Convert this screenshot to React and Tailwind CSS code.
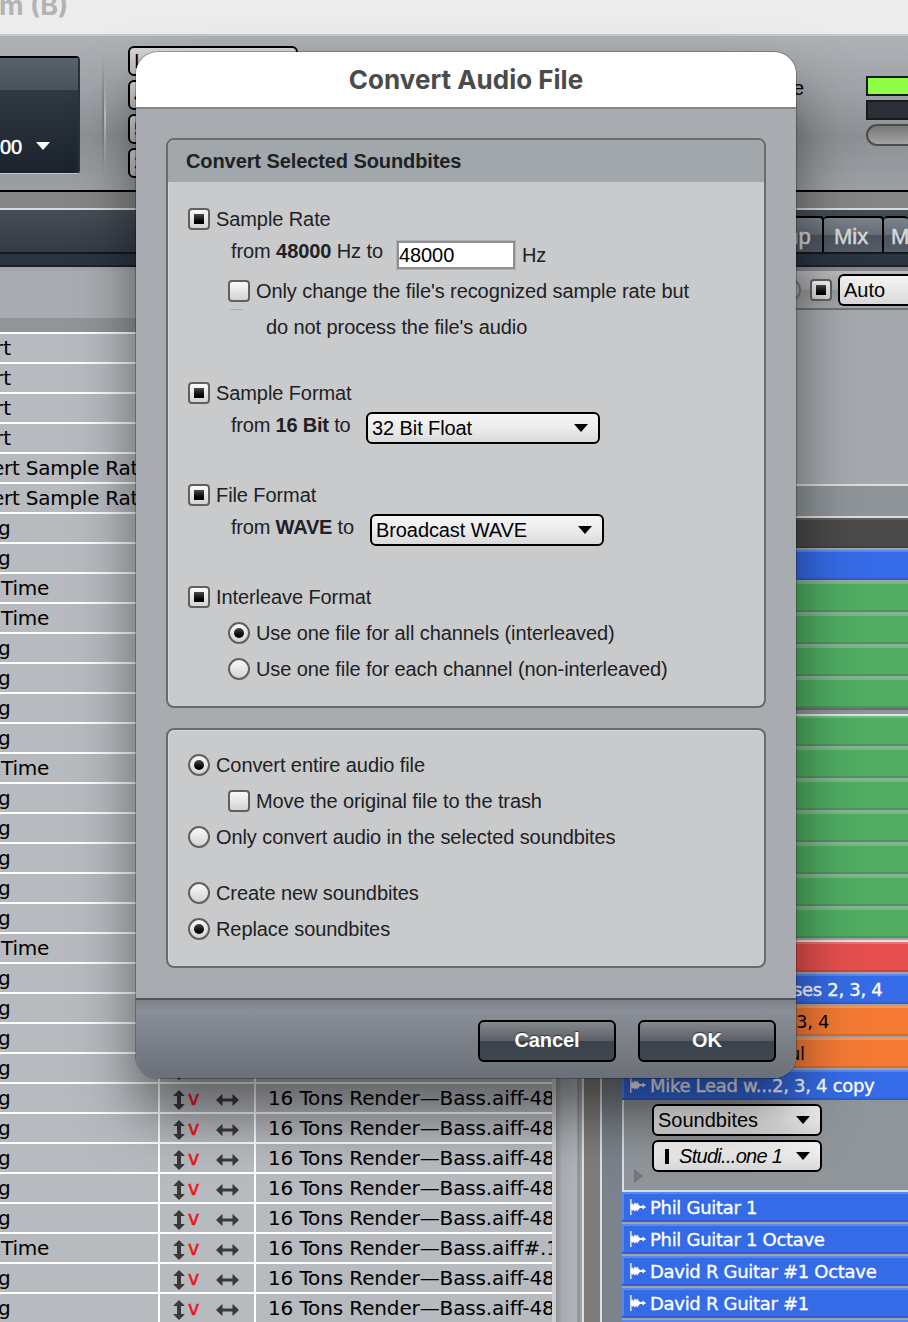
const takes = [
  "rt", "rt", "rt", "rt", "ert Sample Rate", "ert Sample Rate", "g", "g", "Time", "Time", "g",
  "g", "g", "g", "Time", "g", "g", "g", "g", "g", "Time", "g",
  "g", "g", "g", "g", "g", "g", "g", "g", "Time", "g", "g",
];

const takeOffset = {
  rt: "-ml-[5px]",
  "ert Sample Rate": "-ml-[8px] tracking-[-0.25px]",
  g: "-ml-[2px]",
  Time: "ml-[1px] tracking-[-0.2px]",
};

const trackColors = {
  dark: "bg-[#4a4a4a] border-t-[#606060] border-b-[#414141]",
  blue: "bg-[#356be6] border-t-[#5789ee] border-b-[#2d5dce]",
  green: "bg-[#50ad62] border-t-[#71bd80] border-b-[#459a56]",
  red: "bg-[#e54f4e] border-t-[#ec7170] border-b-[#cb4443]",
  orange: "bg-[#f47a34] border-t-[#f79558] border-b-[#d96b2d]",
};

function Triangle({ className = "" }) {
  return (
    <svg className={`shrink-0 ${className}`} width="14" height="8" viewBox="0 0 14 8">
      <path d="M0 0H14L7 8Z" fill="currentColor" />
    </svg>
  );
}

function VerticalArrow() {
  return (
    <svg width="12" height="20" viewBox="0 0 12 20" fill="#3a3a3a">
      <path d="M6 0L11.5 5.5V6H8V14H11.5V14.5L6 20L0.5 14.5V14H4V6H0.5V5.5Z" />
    </svg>
  );
}

function HorizontalArrow() {
  return (
    <svg width="23" height="12" viewBox="0 0 23 12" fill="#3a3a3a">
      <path d="M0 6L6 0.3H6.5V4.6H16.5V0.3H17L23 6L17 11.7H16.5V7.4H6.5V11.7H6Z" />
    </svg>
  );
}

function WaveIcon() {
  return (
    <svg className="shrink-0" width="16" height="16" viewBox="0 0 16 16" fill="currentColor">
      <path d="M0.2 0H1.5V5.6L2.6 4V5.2L3.8 5.4L5 3.2L6.2 5L7.6 3.8L8.6 5.8L10 7H12L13.3 5.4L14.2 7L15.8 7.4V8.6L14.2 9L13.3 10.6L12 9H10L8.6 10.4L7.6 12.2L6.2 11L5 12.8L3.8 10.8L2.6 11.4V12.6L1.5 10.4V16H0.2Z" />
    </svg>
  );
}

function Check({ checked, round }) {
  return (
    <span
      className={`flex size-[22px] shrink-0 items-center justify-center border-2 border-[#625f5e] bg-linear-to-b from-[#fafafa] to-[#d3d3d5] ${round ? "rounded-full" : "rounded-[4px]"}`}
    >
      {checked && (
        <span className={`size-[10px] bg-linear-to-b from-[#4c4c4c] to-black ${round ? "rounded-full" : ""}`} />
      )}
    </span>
  );
}

function Option({ label, checked, round, indent }) {
  return (
    <div className={`flex h-9 items-center gap-[6px] ${indent ? "pl-[60px]" : "pl-5"}`}>
      <Check checked={checked} round={round} />
      <span>{label}</span>
    </div>
  );
}

function Select({ children, className = "" }) {
  return (
    <div
      className={`flex h-8 items-center justify-between rounded-[6px] border-2 border-black bg-linear-to-b from-[#f5f5f5] via-[#ececec] to-[#dadada] pr-[10px] pl-1 text-black ${className}`}
    >
      {children}
      <Triangle />
    </div>
  );
}

function Button({ children }) {
  return (
    <div className="flex h-[42px] w-[138px] items-center justify-center rounded-[6px] border-2 border-black bg-[linear-gradient(#85898c_0%,#5a6067_49%,#3a424b_50%,#3e474f_100%)] pb-[3px] font-bold text-white [text-shadow:0_-1px_1px_#333]">
      {children}
    </div>
  );
}

function Track({ color, label, inset, icon, dark }) {
  return (
    <div className="border-b-2 border-[#a3a2a5]">
      <div
        className={`flex h-[30px] items-center border-t-2 border-b-2 text-[18px] tracking-[-0.3px] whitespace-nowrap ${trackColors[color]} ${inset || "pl-2"} ${dark ? "text-black" : "text-white [-webkit-text-stroke:0.35px_white]"} ${icon ? "shadow-[inset_2px_0_0_#5789ee]" : ""}`}
      >
        {icon && <WaveIcon />}
        <span className={icon ? "ml-1 pt-px" : "pt-px"}>{label}</span>
      </div>
    </div>
  );
}

function Toolbar() {
  return (
    <div className="flex h-[154px] bg-[linear-gradient(#aeb2b6_0%,#9fa3a7_35%,#8d9195_65%,#9da1a5_100%)]">
      <div className="mt-5 flex h-[118px] w-20 flex-col rounded-r-[4px] border-t-2 border-r-2 border-b border-t-black border-r-[#2a323b] border-b-[#c5c7ca] bg-linear-to-b from-[#3a424c] to-[#1a222c]">
        <div className="h-8 bg-linear-to-b from-[#59616b] to-[#4a525b]" />
        <div className="mt-[45px] flex items-center text-[20px] leading-6 text-white">
          <span className="w-9 [-webkit-text-stroke:0.5px_white]">00</span>
          <Triangle className="-mt-[3px]" />
        </div>
      </div>
      <div className="mt-5 ml-[22px] h-[122px] w-[4px] bg-linear-to-b from-transparent via-[#7a7c80] to-transparent">
        <div className="ml-[2px] h-full w-[2px] bg-linear-to-b from-transparent via-[#c0c3c6] to-transparent" />
      </div>
      <div className="mt-[10px] ml-[22px] flex w-[170px] flex-col gap-1 text-[20px] leading-[26px] text-black">
        {["I", "4", "5", "3"].map((t) => (
          <div key={t} className="h-[30px] rounded-[6px] border-2 border-black bg-linear-to-b from-[#d8d8d8] to-[#bdbdbd] pl-1">
            {t}
          </div>
        ))}
      </div>
      <div className="mt-10 ml-auto w-[115px] text-[20px] leading-6 text-black">e</div>
      <div className="-ml-[42px] flex w-[42px] flex-col gap-1 pt-10">
        <div className="h-5 border-2 border-r-0 border-[#1a1a1a] bg-[#8dff45]" />
        <div className="h-5 border-2 border-r-0 border-[#1a1a1a] bg-[#2b2f38]" />
        <div className="h-[22px] rounded-l-full border-2 border-r-0 border-[#4c4c4c] bg-linear-to-b from-[#777] to-[#a3a3a3]" />
      </div>
    </div>
  );
}

function TabBar() {
  return (
    <div>
      <div className="flex h-[42px] justify-end bg-linear-to-b from-[#454e57] to-[#343b45] pt-[6px] text-[22px] leading-[38px] text-[#d6d8da] [-webkit-text-stroke:0.5px_#d6d8da]">
        {[
          ["Comp", "w-[72px] pl-0"],
          ["Mix", "w-[60px] pl-[10px]"],
          ["MIDI", "w-6 pl-[7px]"],
        ].map(([t, cls]) => (
          <div
            key={t}
            className={`h-9 overflow-hidden rounded-t-[4px] border-t-2 border-r-2 border-black bg-[linear-gradient(#7d838c_0%,#666c76_50%,#4c535e_50%,#555c68_100%)] last:border-r-0 ${cls}`}
          >
            {t}
          </div>
        ))}
      </div>
      <div className="h-[15px] border-t-2 border-b-2 border-t-[#14171b] border-b-[#1c222b] bg-[#2b3441]" />
    </div>
  );
}

function TakeList() {
  return (
    <div className="w-[556px] shrink-0 border-r-4 border-[#cfcfd1] bg-[#b7babf]">
      <div className="h-[51px] bg-linear-to-b from-[#9fa3a7] to-[#a9adb1] to-10%" />
      <div className="h-[16px] border-b-2 border-white bg-[#8f9599]" />
      {takes.map((take, i) => (
        <div key={i} className="flex h-[30px] border-b-2 border-white text-[20px] leading-7 whitespace-nowrap text-black">
          <div className="w-40 shrink-0 overflow-hidden border-r-2 border-white">
            <div className={takeOffset[take]}>{take}</div>
          </div>
          <div className="flex w-24 shrink-0 border-r-2 border-white pl-[13px]">
            <div className="pt-[6px]"><VerticalArrow /></div>
            <div className="ml-[3px] w-7 text-[19px] text-[#e8191b] [-webkit-text-stroke:0.6px_#e8191b]">v</div>
            <div className="pt-[10px]"><HorizontalArrow /></div>
          </div>
          <div className="grow overflow-hidden pl-3 tracking-[-0.13px]">
            {i === 30 ? "16 Tons Render—Bass.aiff#.1" : "16 Tons Render—Bass.aiff-48"}
          </div>
        </div>
      ))}
    </div>
  );
}

function TrackList() {
  return (
    <div className="min-w-0 grow">
      <div className="flex h-[43px] items-center justify-end border-t-4 border-b-2 border-t-[#85888c] border-b-[#6f7275] bg-[linear-gradient(#bbbdc0_0%,#a6a8ab_50%,#96989b_51%,#a5a7aa_100%)] pt-px font-['Liberation_Sans',Arial,sans-serif] text-[20px]">
        <span className="mr-[9px] size-6 rounded-full border-2 border-[#77797c] bg-[#b0b2b4]" />
        <Check checked />
        <div className="ml-[6px] flex h-8 w-[70px] items-center rounded-l-[6px] border-2 border-r-0 border-black bg-linear-to-b from-[#f5f5f5] to-[#dadada] pl-1">
          Auto
        </div>
      </div>
      <div className="h-[176px] border-b-2 border-[#dcdddf] bg-[#a5a9ae]" />
      <div className="h-8 border-b-2 border-[#dcdddf] bg-[#8e9498]" />
      <Track color="dark" />
      <Track color="blue" />
      <Track color="green" />
      <Track color="green" />
      <Track color="green" />
      <div className="h-[30px] border-t-2 border-b-2 border-t-[#71bd80] border-b-[#459a56] bg-[#50ad62]" />
      <div className="h-2 border-t-2 border-b-2 border-t-[#6c6d78] border-b-[#e2e2e2] bg-[#8e9499]" />
      {[0, 1, 2, 3, 4, 5, 6].map((i) => <Track key={i} color="green" />)}
      <div className="h-0.5 bg-[#e2e2e2]" />
      <Track color="red" />
      <Track color="blue" label="ses 2, 3, 4" inset="pl-[171px]" />
      <Track color="orange" label="3, 4" inset="pl-[174px]" dark />
      <Track color="orange" label="ul" inset="pl-[167px]" dark />
      <div className="h-[30px]">
        <Track color="blue" icon label="Mike Lead w...2, 3, 4 copy" />
      </div>
      <div className="relative flex h-[92px] flex-col gap-1 border-b-2 border-l-2 border-[#dcdddf] bg-[#8f9599] pt-1 pl-7 font-['Liberation_Sans',Arial,sans-serif] text-[20px]">
        <Select className="w-[170px]">Soundbites</Select>
        <Select className="w-[170px]">
          <span className="flex items-center pl-[7px]">
            <span className="h-[15px] w-1 bg-black" />
            <span className="ml-[10px] tracking-[-0.7px] italic">Studi...one 1</span>
          </span>
        </Select>
        <svg className="absolute top-[69px] left-[10px]" width="9" height="14" viewBox="0 0 9 14">
          <path d="M0 0L9 7L0 14Z" fill="#72767a" />
        </svg>
      </div>
      <Track color="blue" icon label="Phil Guitar 1" />
      <Track color="blue" icon label="Phil Guitar 1 Octave" />
      <Track color="blue" icon label="David R Guitar #1 Octave" />
      <Track color="blue" icon label="David R Guitar #1" />
      <Track color="blue" />
    </div>
  );
}

function Group({ title, children, className }) {
  return (
    <div className={`overflow-hidden rounded-[8px] border-2 border-[#6b6a6a] bg-[#c9cacc] shadow-[inset_1px_1px_0_#d6d7d8] ${className}`}>
      {title && <div className="h-[42px] bg-[#a1a7ab] pl-[18px] leading-[42px] font-bold">{title}</div>}
      {children}
    </div>
  );
}

function Dialog() {
  return (
    <div className="absolute top-[52px] left-[136px] flex h-[1026px] w-[660px] flex-col overflow-hidden rounded-[22px] bg-[#a8abb0] font-['Liberation_Sans',Arial,sans-serif] text-[20px] tracking-[-0.09px] text-[#202124] shadow-[0_0_0_1px_rgba(0,0,0,0.25),0_36px_60px_rgba(0,0,0,0.5)]">
      <div className="h-[57px] shrink-0 border-b-2 border-[#858789] bg-white text-center font-['Inter',sans-serif] text-[26px] leading-[55px] font-bold tracking-normal text-[#4b4b4b]">
        Convert Audio File
      </div>
      <div className="flex grow flex-col gap-5 px-[30px] pt-[29px]">
        <Group title="Convert Selected Soundbites" className="relative h-[570px]">
          <div className="pt-[19px]">
            <Option label="Sample Rate" checked />
            <div className="flex h-9 items-center pl-[63px]">
              <span className="mb-2 w-[165px]">from <b>48000</b> Hz to</span>
              <div className="flex h-[30px] w-[120px] items-center border border-[#b0b1b3] bg-white pl-[2px] text-black shadow-[inset_0_0_0_2px_#8f9092]">
                48000
              </div>
              <span className="ml-[6px]">Hz</span>
            </div>
            <Option label="Only change the file's recognized sample rate but" indent />
            <div className="flex h-9 items-center pl-[98px]">do not process the file's audio</div>
            <div className="absolute top-[169px] left-[62px] h-px w-[13px] bg-[#a9a8c4]" />
          </div>
          <div className="pt-[30px]">
            <Option label="Sample Format" checked />
            <div className="flex h-9 items-center pl-[63px]">
              <span className="mb-2 w-[135px] tracking-[-0.2px]">from <b>16 Bit</b> to</span>
              <Select className="mb-0.5 w-[234px]">32 Bit Float</Select>
            </div>
          </div>
          <div className="pt-[30px]">
            <Option label="File Format" checked />
            <div className="flex h-9 items-center pl-[63px]">
              <span className="mb-2 w-[139px] tracking-[-0.2px]">from <b>WAVE</b> to</span>
              <Select className="mb-0.5 w-[234px]">Broadcast WAVE</Select>
            </div>
          </div>
          <div className="pt-[30px]">
            <Option label="Interleave Format" checked />
            <Option label="Use one file for all channels (interleaved)" checked round indent />
            <Option label="Use one file for each channel (non-interleaved)" round indent />
          </div>
        </Group>
        <Group className="h-[240px] pt-[17px]">
          <Option label="Convert entire audio file" checked round />
          <Option label="Move the original file to the trash" indent />
          <Option label="Only convert audio in the selected soundbites" round />
          <div className="h-5" />
          <Option label="Create new soundbites" round />
          <Option label="Replace soundbites" checked round />
        </Group>
      </div>
      <div className="flex h-20 shrink-0 justify-end gap-[22px] border-t-2 border-[#50545c] bg-[linear-gradient(#7d8286_0%,#8a8e97_14%,#6a6f78_100%)] pt-5 pr-5">
        <Button>Cancel</Button>
        <Button>OK</Button>
      </div>
    </div>
  );
}

export default function App() {
  return (
    <div className="relative h-[1322px] w-[908px] overflow-hidden bg-[#7c838b] font-['Liberation_Sans',Arial,sans-serif]">
      <div className="h-9 border-b-2 border-[#c6c9cb] bg-[#ececec]">
        <div className="-ml-[1px] -translate-y-[12px] font-['Inter',sans-serif] text-[27px] leading-[36px] font-bold text-[#b3b3b3]">m (B)</div>
      </div>
      <Toolbar />
      <div className="h-5 border-t-2 border-b-2 border-t-black border-b-[#dcdcdc] bg-[#858585]" />
      <TabBar />
      <div className="flex font-['DejaVu_Sans',Verdana,sans-serif]">
        <TakeList />
        <div className="w-[26px] shrink-0 bg-[linear-gradient(90deg,#8f9296_0%,#a9adb2_25%,#b0b4b9_80%,#8c8f93_84%,#a5a8ab_100%)]" />
        <div className="w-5 shrink-0 border-x-2 border-[#e0e0e0] bg-[#7f7d7b]" />
        <div className="w-5 shrink-0 bg-[#7b828b]" />
        <TrackList />
      </div>
      <Dialog />
    </div>
  );
}
